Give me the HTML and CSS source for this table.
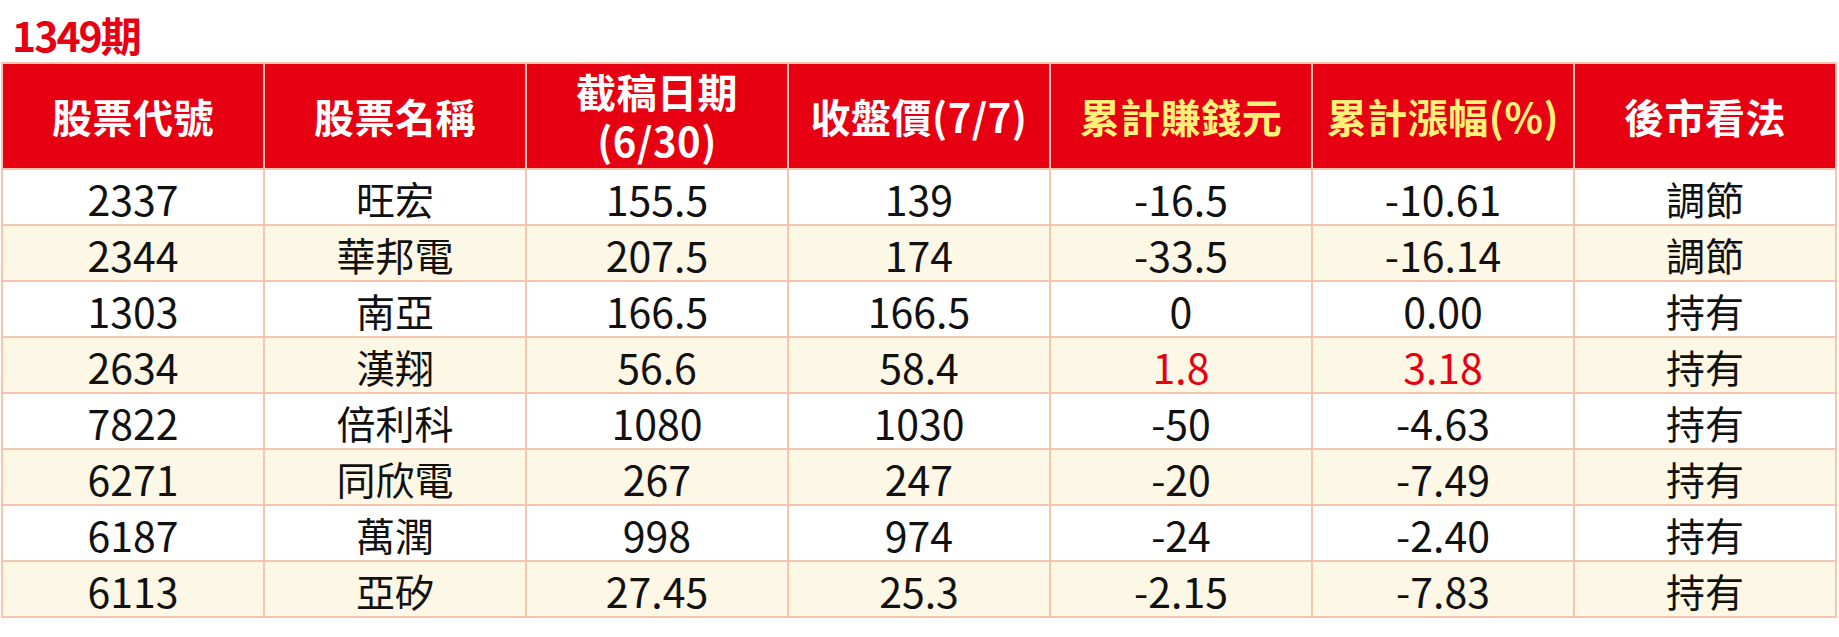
FILE: index.html
```html
<!DOCTYPE html>
<html lang="zh-Hant">
<head>
<meta charset="utf-8">
<title>1349期</title>
<link rel="stylesheet" href="styles.css">
</head>
<body>
<div class="page">
  <div class="title">1349期</div>
  <table class="stocks">
    <thead>
      <tr>
        <th>股票代號</th>
        <th>股票名稱</th>
        <th>截稿日期<br>(6/30)</th>
        <th>收盤價(7/7)</th>
        <th class="hl">累計賺錢元</th>
        <th class="hl">累計漲幅(%)</th>
        <th>後市看法</th>
      </tr>
    </thead>
    <tbody>
      <tr><td class="n">2337</td><td class="c">旺宏</td><td class="n">155.5</td><td class="n">139</td><td class="n">-16.5</td><td class="n">-10.61</td><td class="c">調節</td></tr>
      <tr><td class="n">2344</td><td class="c">華邦電</td><td class="n">207.5</td><td class="n">174</td><td class="n">-33.5</td><td class="n">-16.14</td><td class="c">調節</td></tr>
      <tr><td class="n">1303</td><td class="c">南亞</td><td class="n">166.5</td><td class="n">166.5</td><td class="n">0</td><td class="n">0.00</td><td class="c">持有</td></tr>
      <tr><td class="n">2634</td><td class="c">漢翔</td><td class="n">56.6</td><td class="n">58.4</td><td class="n up">1.8</td><td class="n up">3.18</td><td class="c">持有</td></tr>
      <tr><td class="n">7822</td><td class="c">倍利科</td><td class="n">1080</td><td class="n">1030</td><td class="n">-50</td><td class="n">-4.63</td><td class="c">持有</td></tr>
      <tr><td class="n">6271</td><td class="c">同欣電</td><td class="n">267</td><td class="n">247</td><td class="n">-20</td><td class="n">-7.49</td><td class="c">持有</td></tr>
      <tr><td class="n">6187</td><td class="c">萬潤</td><td class="n">998</td><td class="n">974</td><td class="n">-24</td><td class="n">-2.40</td><td class="c">持有</td></tr>
      <tr><td class="n">6113</td><td class="c">亞矽</td><td class="n">27.45</td><td class="n">25.3</td><td class="n">-2.15</td><td class="n">-7.83</td><td class="c">持有</td></tr>
    </tbody>
  </table>
</div>
</body>
</html>
```
FILE: styles.css
```css
html, body {
  margin: 0;
  padding: 0;
  background: #ffffff;
}

.page {
  padding-left: 1px;
  font-family: "Noto Sans CJK TC", "Noto Sans CJK SC", sans-serif;
}

.title {
  height: 62px;
  padding-left: 11px;
  box-sizing: border-box;
  color: #e60012;
  font-weight: 700;
  font-size: 41px;
  line-height: 68px;
  letter-spacing: -2px;
}

.stocks {
  width: 1836px;
  table-layout: fixed;
  border-collapse: collapse;
}

.stocks th,
.stocks td {
  border: 2px solid #f6c5ad;
  text-align: center;
  padding: 0;
}

.stocks th {
  background: #e60012;
  color: #ffffff;
  font-weight: 700;
  font-size: 40px;
  line-height: 49px;
  height: 104px;
  letter-spacing: 0.5px;
}

.stocks th.hl {
  color: #fff17a;
}

.stocks td {
  height: 54px;
  color: #111111;
  line-height: 51px;
  padding-top: 3px;
  box-sizing: border-box;
}

.stocks tbody tr:nth-child(even) td {
  background: #fdf7e6;
}

.stocks td.n {
  font-size: 41px;
}

.stocks td.c {
  font-size: 39px;
}

.stocks td.up {
  color: #e60012;
}
```
